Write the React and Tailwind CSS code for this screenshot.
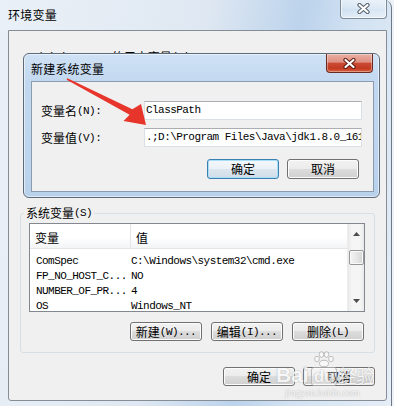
import React from 'react';

// Win7 style "环境变量" window with the "新建系统变量" dialog on top
const cjk = "font-['Noto_Sans_CJK_SC',sans-serif]";
const mono = "font-['Liberation_Mono','Noto_Sans_CJK_SC',monospace] text-[11px] tracking-[-0.55px]";

const sysVars = [
  ['ComSpec', 'C:\\Windows\\system32\\cmd.exe'],
  ['FP_NO_HOST_C...', 'NO'],
  ['NUMBER_OF_PR...', '4'],
  ['OS', 'Windows_NT'],
];

function Mono({ children }) {
  return <span className={mono}>{children}</span>;
}

function CloseGlyph({ edge }) {
  return (
    <svg width="13" height="11" viewBox="0 0 13 11">
      <path d="M2.5 2 L10.5 9 M10.5 2 L2.5 9" stroke={edge} strokeWidth="4.2" strokeLinecap="round" fill="none" />
      <path d="M2.5 2 L10.5 9 M10.5 2 L2.5 9" stroke="#ffffff" strokeWidth="2.2" strokeLinecap="round" fill="none" />
    </svg>
  );
}

function Button({ children, isDefault, tall }) {
  const look = isDefault
    ? 'border-[#3c7fb1] bg-[linear-gradient(180deg,#f4f8fb_0%,#ebf1f6_50%,#dce6ee_50%,#d0dde8_100%)] shadow-[inset_0_0_0_1px_#a9def8]'
    : 'border-[#707070] bg-[linear-gradient(180deg,#f2f2f2_0%,#ebebeb_50%,#dddddd_50%,#cfcfcf_100%)] shadow-[inset_0_0_0_1px_#fcfcfc]';
  return (
    <div
      className={`w-[72px] ${tall ? 'h-[20px]' : 'h-[19px]'} flex items-center justify-center rounded-[3px] border text-[12px] leading-[14px] ${look}`}
    >
      {children}
    </div>
  );
}

function TextBox({ children }) {
  return (
    <div className="w-[218px] h-[19px] mr-[11px] flex items-center overflow-hidden bg-white border border-[#dbdfe6] border-t-[#abadb3]">
      <div className={`${mono} leading-[17px] whitespace-nowrap pl-[1px]`}>{children}</div>
    </div>
  );
}

function Triangle({ up }) {
  return (
    <svg width="7" height="4" viewBox="0 0 7 4">
      <polygon points={up ? '3.5,0 7,4 0,4' : '0,0 7,0 3.5,4'} fill="#4d4d4d" />
    </svg>
  );
}

function VarList() {
  return (
    <div className="w-[336px] h-[89px] border border-[#828790] bg-white flex overflow-hidden">
      <div className="flex-1 flex flex-col">
        <div className="h-[25px] shrink-0 flex border-b border-[#e5e5e5] bg-[linear-gradient(180deg,#ffffff_0%,#ffffff_55%,#f3f4f6_100%)] text-[12px] leading-[14px]">
          <div className="w-[101px] border-r border-[#e5e5e5] pl-[5px] pt-[7px]">变量</div>
          <div className="pl-[5px] pt-[7px]">值</div>
        </div>
        <div className="pt-[3px]">
          {sysVars.map(([name, value]) => (
            <div key={name} className="flex h-[15px] items-center leading-[15px]">
              <div className="w-[101px] pl-[6px] whitespace-nowrap">
                <Mono>{name}</Mono>
              </div>
              <div className="whitespace-nowrap">
                <Mono>{value}</Mono>
              </div>
            </div>
          ))}
        </div>
      </div>
      {/* scrollbar */}
      <div className="w-[17px] border-l border-[#ececec] bg-[linear-gradient(90deg,#e9e9e9_0%,#f5f5f5_25%,#f5f5f5_75%,#e9e9e9_100%)] flex flex-col items-center">
        <div className="h-[20px] flex items-center justify-center">
          <Triangle up />
        </div>
        <div className="mt-[6px] w-[15px] h-[15px] border border-[#979797] rounded-[2px] bg-[linear-gradient(90deg,#f4f4f4_0%,#e7e7e7_50%,#d5d5d5_100%)] shadow-[inset_0_0_0_1px_#fafafa]" />
        <div className="flex-1" />
        <div className="h-[20px] flex items-center justify-center">
          <Triangle />
        </div>
      </div>
    </div>
  );
}

function NewVarDialog() {
  return (
    <div className="absolute left-[23px] top-[53px] w-[357px] h-[145px] rounded-[6px] border border-[#5d6a79] bg-[linear-gradient(180deg,#cfe1f4_0%,#c2d8f0_20%,#b9d2ec_100%)] shadow-[inset_0_0_0_1px_rgba(255,255,255,0.55)] flex flex-col">
      <div className="h-[27px] flex items-start">
        <div className="pl-[7px] pt-[8px] text-[12px] leading-[14px] tracking-[0.2px]">新建系统变量</div>
        <div className="ml-auto mr-[6px] w-[47px] h-[19px] flex items-center justify-center rounded-b-[4px] border border-t-0 border-[#6b2a20] bg-[linear-gradient(180deg,#eab0a4_0%,#de8f80_45%,#cb4a33_52%,#c23a22_80%,#d9633f_100%)] shadow-[inset_0_0_0_1px_rgba(255,255,255,0.35)]">
          <CloseGlyph edge="#5e1c12" />
        </div>
      </div>
      <div className="ml-[7px] w-[343px] h-[111px] border border-[#8b9bb0] bg-[#f0f0f0] flex flex-col">
        <div className="mt-[19px] h-[19px] flex items-center">
          <div className="flex-1 flex items-center pl-[9px] text-[12px] leading-[14px]">
            变量名<Mono>(N):</Mono>
          </div>
          <TextBox>ClassPath</TextBox>
        </div>
        <div className="mt-[8px] h-[19px] flex items-center">
          <div className="flex-1 flex items-center pl-[9px] text-[12px] leading-[14px]">
            变量值<Mono>(V):</Mono>
          </div>
          <TextBox>.;D:\Program Files\Java\jdk1.8.0_161\lib\dt.jar</TextBox>
        </div>
        <div className="mt-[12px] flex justify-end gap-[8px] pr-[14px]">
          <Button isDefault tall>确定</Button>
          <Button tall>取消</Button>
        </div>
      </div>
    </div>
  );
}

function Watermark() {
  return (
    <div className="absolute left-[276px] top-[351px] pointer-events-none select-none opacity-80 text-[#fbfbfb] [text-shadow:0_0_1.5px_#8f8f8f]">
      <div className="flex items-end">
        <div className="font-['Liberation_Sans',sans-serif] font-bold text-[21px] leading-[22px]">Bai</div>
        <div className="flex flex-col items-center ml-[2px]">
          <svg width="22" height="16" viewBox="0 0 22 16">
            <g fill="#fbfbfb" stroke="#a0a0a0" strokeWidth="0.8">
              <ellipse cx="4" cy="8" rx="2.3" ry="2.8" />
              <ellipse cx="8.5" cy="3.5" rx="2.3" ry="2.8" />
              <ellipse cx="13.5" cy="3.5" rx="2.3" ry="2.8" />
              <ellipse cx="18" cy="8" rx="2.3" ry="2.8" />
              <ellipse cx="11" cy="12.5" rx="4.5" ry="3.2" />
            </g>
          </svg>
          <div className="font-['Liberation_Sans',sans-serif] font-bold text-[17px] leading-[17px] px-[2px] rounded-[3px] border border-[#b0b0b0] bg-[rgba(255,255,255,0.35)]">du</div>
        </div>
        <div className="text-[18px] leading-[22px] ml-[1px]">经验</div>
      </div>
      <div className="font-['Liberation_Serif',serif] text-[10px] leading-[11px] ml-[9px] mt-[1px]">jingyan.baidu.com</div>
    </div>
  );
}

export default function App() {
  return (
    <div className={`w-[394px] h-[406px] relative overflow-hidden bg-[#edf2f8] text-black ${cjk}`}>
      <div className="w-[392px] h-[406px] border-r border-[#6c7885] rounded-tr-[8px] bg-[linear-gradient(100deg,#eaf0f7_0%,#dfe8f2_45%,#bcd3ec_66%,#d2e2f2_78%,#e6eef7_100%)] flex flex-col">
        {/* title bar */}
        <div className="h-[30px] shrink-0 flex items-start">
          <div className="pl-[8px] pt-[8px] text-[12px] leading-[14px] tracking-[0.25px]">环境变量</div>
          <div className="ml-auto mr-[4px] mt-[-1px] w-[47px] h-[20px] flex items-center justify-center rounded-b-[4px] border border-t-0 border-[#7f8b98] bg-[linear-gradient(180deg,rgba(255,255,255,0.55)_0%,rgba(255,255,255,0.2)_50%,rgba(255,255,255,0.05)_52%,rgba(255,255,255,0.4)_100%)] shadow-[inset_0_0_0_1px_rgba(255,255,255,0.6)]">
            <CloseGlyph edge="#56606c" />
          </div>
        </div>

        {/* client area */}
        <div className="ml-[8px] w-[379px] h-[371px] shrink-0 border border-[#858d97] rounded-b-[3px] bg-[#f0f0f0] flex flex-col">
          <div className="h-[30px] shrink-0 flex items-start pt-[19px] pl-[21px] text-[12px] leading-[14px] whitespace-nowrap">
            <Mono>Administrator</Mono>
            <span className="ml-[3px]">的用户变量</span>
            <Mono>(U)</Mono>
          </div>

          <fieldset className="mt-[145px] ml-[11px] w-[355px] shrink-0 border border-[#d5dfe5] rounded-[3px] pl-[8px] pr-[9px] pt-[3px] pb-[11px]">
            <legend className="ml-[-5px] px-[2px] h-[14px] flex items-center text-[12px] leading-[14px]">
              系统变量<Mono>(S)</Mono>
            </legend>
            <VarList />
            <div className="mt-[10px] flex justify-end gap-[9px] pr-[1px]">
              <Button>
                新建<Mono>(W)...</Mono>
              </Button>
              <Button>
                编辑<Mono>(I)...</Mono>
              </Button>
              <Button>
                删除<Mono>(L)</Mono>
              </Button>
            </div>
          </fieldset>

          <div className="mt-[14px] flex justify-end gap-[8px] pr-[11px]">
            <Button>确定</Button>
            <Button>取消</Button>
          </div>
        </div>
      </div>

      <NewVarDialog />

      {/* red annotation arrow */}
      <svg className="absolute left-0 top-0 pointer-events-none" width="394" height="406" viewBox="0 0 394 406">
        <polygon
          points="67.4,78.3 132.4,109.3 141,104 146,125 123.5,121 129.6,114.7 66.6,79.7"
          fill="#e8352c"
        />
      </svg>

      <Watermark />
    </div>
  );
}
